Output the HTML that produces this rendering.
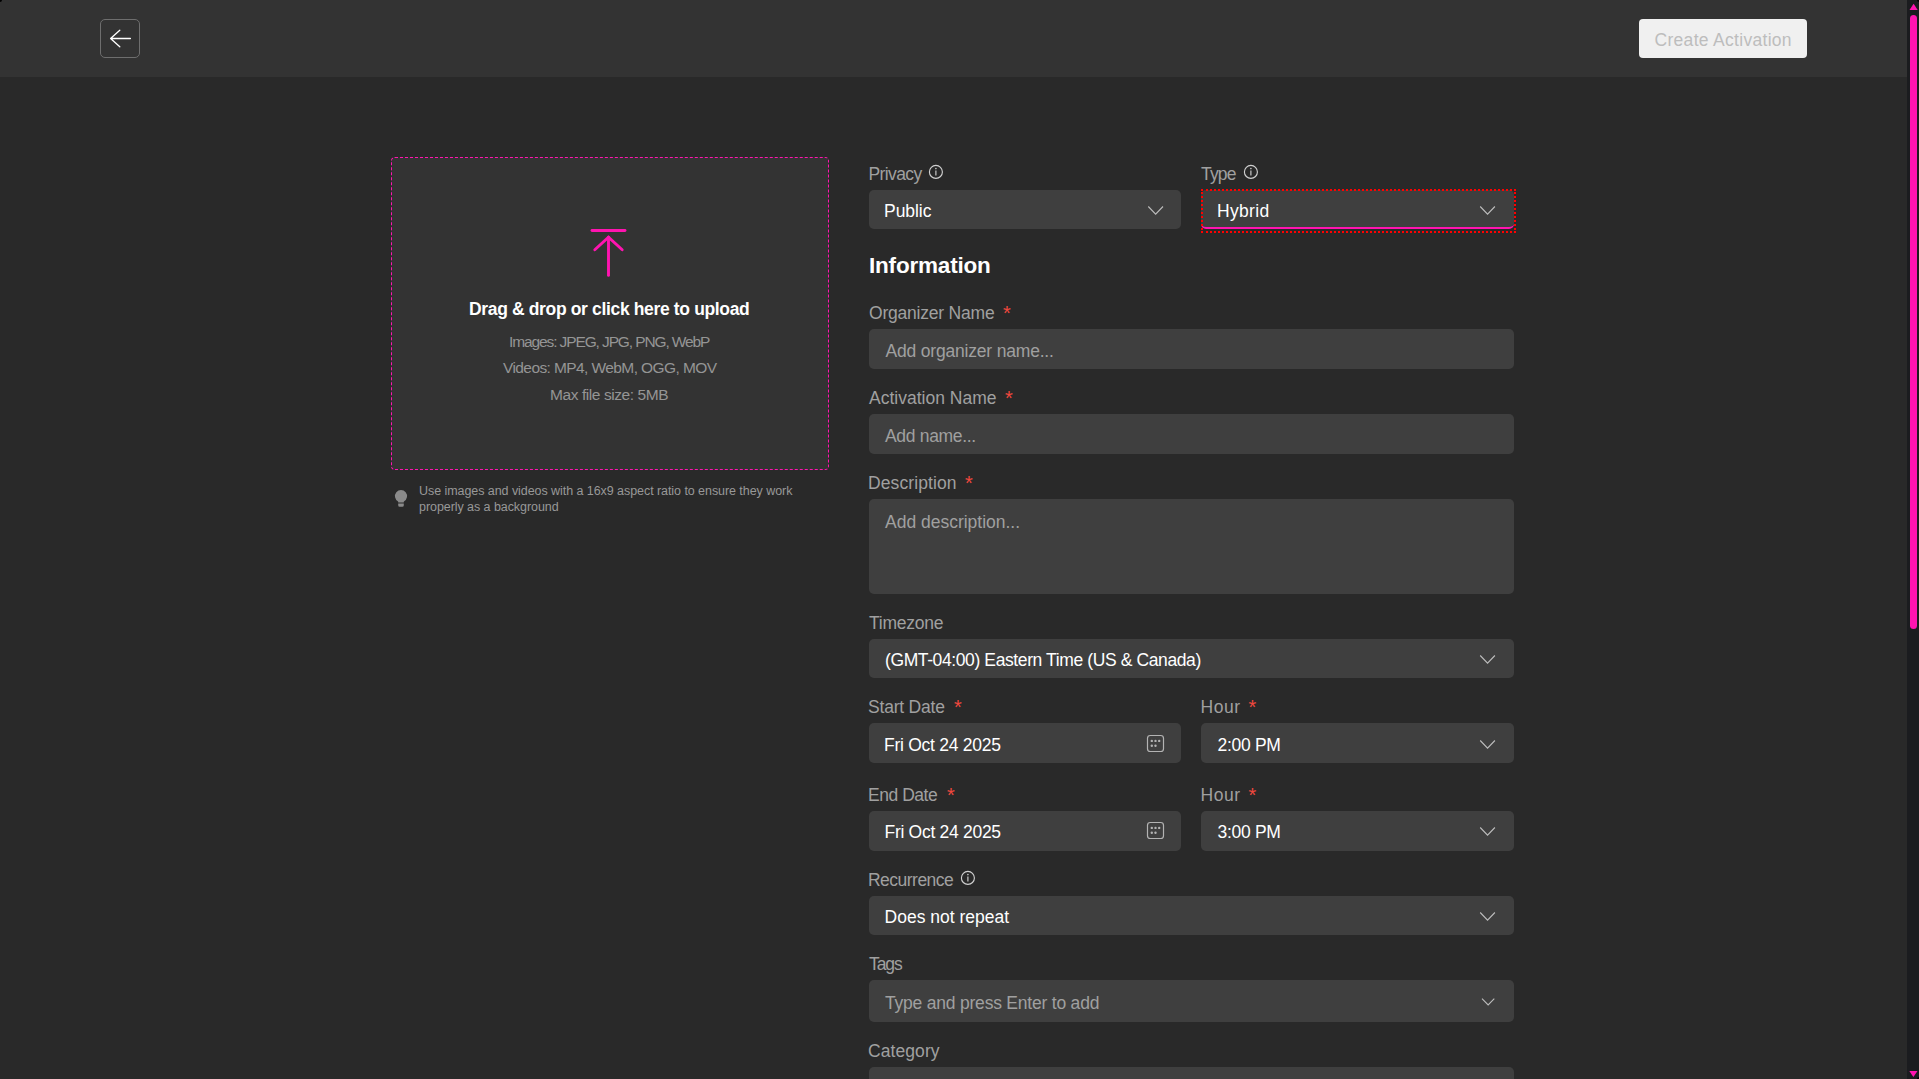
<!DOCTYPE html>
<html><head><meta charset="utf-8">
<style>
*{margin:0;padding:0;box-sizing:border-box}
html,body{width:1919px;height:1079px;overflow:hidden;background:#292929;font-family:"Liberation Sans",sans-serif}
.a{position:absolute}
.t{position:absolute;white-space:nowrap;line-height:20px}
.hdr{left:0;top:0;width:1907px;height:77px;background:#333333}
.back{left:100px;top:19px;width:40px;height:39px;border:1px solid #6e6e6e;border-radius:5px}
.create{left:1639px;top:19px;width:168px;height:39px;background:#f0f0f0;border-radius:4px}
.sb{left:1907px;top:0;width:12px;height:1079px;background:#1b1c1f}
.thumb{left:1910px;top:15px;width:7px;height:614px;background:#ff14b0;border-radius:4px}
.upl{left:391px;top:157px;width:438px;height:313px;background:#333333;border:1px dashed #ff14b0;border-radius:4px}
.lbl{font-size:17.5px;color:#a0a0a0}
.val{font-size:17.5px;color:#ffffff}
.ph{font-size:17.5px;color:#a0a0a0}
.fld{position:absolute;background:#3f3f3f;border-radius:5px}
.req{color:#f0483e;font-size:20px}
.info{font-size:15.5px;color:#959595}
</style></head><body>
<div class="a hdr"></div>
<div class="a back"></div>
<svg class="a" style="left:100px;top:19px" width="40" height="40" viewBox="0 0 40 40">
 <path d="M10.6 19.5 H30.4 M10.6 19.5 L19.8 11.2 M10.6 19.5 L19.8 27.8" stroke="#ffffff" stroke-width="1.3" fill="none" stroke-linecap="round"/>
</svg>
<div class="a create"></div>
<div id="t1" class="t" style="left:1654.5px;top:30px;font-size:17.5px;color:#bdbdbd;letter-spacing:0.3px">Create Activation</div>

<div class="a sb"></div>
<svg class="a" style="left:1907px;top:0" width="12" height="1079">
 <path d="M2.5 10.1 L6.6 3.8 L10.7 10.1 Z" fill="#ff14b0"/>
 <path d="M2.3 1070.9 L6.4 1077 L10.5 1070.9 Z" fill="#ff14b0"/>
</svg>
<div class="a thumb"></div>

<div class="a upl"></div>
<svg class="a" style="left:580px;top:220px" width="60" height="70" viewBox="0 0 60 70">
 <g stroke="#ff14b0" stroke-width="2.9" stroke-linecap="round" fill="none">
  <path d="M12 10.5 H45"/>
  <path d="M28.5 17.2 V55.4"/>
  <path d="M14.8 29.8 L28.5 17.2 L42.2 29.8"/>
 </g>
</svg>
<div id="t2" class="t" style="left:469px;top:299px;font-size:17.5px;font-weight:bold;color:#ffffff;letter-spacing:-0.35px">Drag &amp; drop or click here to upload</div>
<div id="t3" class="t info" style="left:509px;top:332px;letter-spacing:-1.11px">Images: JPEG, JPG, PNG, WebP</div>
<div id="t4" class="t info" style="left:503px;top:358px;letter-spacing:-0.59px">Videos: MP4, WebM, OGG, MOV</div>
<div id="t5" class="t info" style="left:550px;top:385px;letter-spacing:-0.42px">Max file size: 5MB</div>

<svg class="a" style="left:390px;top:486px" width="24" height="24" viewBox="0 0 24 24">
 <path d="M8.1 15.4 A6.05 6.05 0 1 1 13.9 15.4 L13.7 16.6 H8.3 Z" fill="#8a8a8a"/>
 <path d="M8.2 17.6 H13.8 V19.3 A1.5 1.5 0 0 1 12.3 20.8 H9.7 A1.5 1.5 0 0 1 8.2 19.3 Z" fill="#8a8a8a"/>
</svg>
<div id="t6" class="t" style="left:419px;top:483px;font-size:12.5px;line-height:16px;color:#989898;letter-spacing:-0.06px">Use images and videos with a 16x9 aspect ratio to ensure they work<br>properly as a background</div>

<!-- Privacy / Type -->
<div id="t7" class="t lbl" style="left:868.5px;top:164px;letter-spacing:-0.6px">Privacy</div>
<div class="fld" style="left:869px;top:190px;width:312px;height:39px"></div>
<div id="t8" class="t val" style="left:884px;top:201px;letter-spacing:-0.04px">Public</div>

<div id="t9" class="t lbl" style="left:1201px;top:164px;letter-spacing:-0.8px">Type</div>
<div class="fld" style="left:1201px;top:190px;width:313px;height:39px;border-bottom:2px solid #ff14b0"></div>
<div class="a" style="left:1201px;top:189px;width:315px;height:44px;border:2px dotted #ff0000"></div>
<div id="t10" class="t val" style="left:1217px;top:201px;letter-spacing:0.32px">Hybrid</div>

<div id="t11" class="t" style="left:869px;top:251px;font-size:22.5px;line-height:30px;font-weight:bold;color:#ffffff;letter-spacing:-0.19px">Information</div>

<div id="t12" class="t lbl" style="left:869px;top:303px;letter-spacing:-0.21px">Organizer Name</div>
<div id="a12" class="t req" style="left:1003px;top:303px">*</div>
<div class="fld" style="left:869px;top:329px;width:645px;height:40px"></div>
<div id="t13" class="t ph" style="left:885.5px;top:341px;letter-spacing:-0.19px">Add organizer name...</div>

<div id="t14" class="t lbl" style="left:869px;top:388px;letter-spacing:0.01px">Activation Name</div>
<div id="a14" class="t req" style="left:1005px;top:388px">*</div>
<div class="fld" style="left:869px;top:414px;width:645px;height:40px"></div>
<div id="t15" class="t ph" style="left:885px;top:426px;letter-spacing:-0.32px">Add name...</div>

<div id="t16" class="t lbl" style="left:868px;top:473px;letter-spacing:0.09px">Description</div>
<div id="a16" class="t req" style="left:965px;top:473px">*</div>
<div class="fld" style="left:869px;top:499px;width:645px;height:95px"></div>
<div id="t17" class="t ph" style="left:885px;top:512px;letter-spacing:-0.01px">Add description...</div>

<div id="t18" class="t lbl" style="left:869px;top:613px;letter-spacing:-0.26px">Timezone</div>
<div class="fld" style="left:869px;top:639px;width:645px;height:39px"></div>
<div id="t19" class="t val" style="left:885px;top:650px;letter-spacing:-0.39px">(GMT-04:00) Eastern Time (US &amp; Canada)</div>

<div id="t20" class="t lbl" style="left:868px;top:697px;letter-spacing:-0.2px">Start Date</div>
<div id="a20" class="t req" style="left:954px;top:697px">*</div>
<div class="fld" style="left:869px;top:723px;width:312px;height:40px"></div>
<div id="t21" class="t val" style="left:884px;top:735px;letter-spacing:-0.26px">Fri Oct 24 2025</div>
<div id="t22" class="t lbl" style="left:1200.5px;top:697px;letter-spacing:0.51px">Hour</div>
<div id="a22" class="t req" style="left:1248.5px;top:697px">*</div>
<div class="fld" style="left:1201px;top:723px;width:313px;height:40px"></div>
<div id="t23" class="t val" style="left:1217.5px;top:735px;letter-spacing:-0.3px">2:00 PM</div>

<div id="t24" class="t lbl" style="left:868px;top:785px;letter-spacing:-0.46px">End Date</div>
<div id="a24" class="t req" style="left:947px;top:785px">*</div>
<div class="fld" style="left:869px;top:811px;width:312px;height:40px"></div>
<div id="t25" class="t val" style="left:884.5px;top:822px;letter-spacing:-0.29px">Fri Oct 24 2025</div>
<div id="t26" class="t lbl" style="left:1200.5px;top:785px;letter-spacing:0.51px">Hour</div>
<div id="a26" class="t req" style="left:1248.5px;top:785px">*</div>
<div class="fld" style="left:1201px;top:811px;width:313px;height:40px"></div>
<div id="t27" class="t val" style="left:1217.5px;top:822px;letter-spacing:-0.3px">3:00 PM</div>

<div id="t28" class="t lbl" style="left:868px;top:870px;letter-spacing:-0.52px">Recurrence</div>
<div class="fld" style="left:869px;top:896px;width:645px;height:39px"></div>
<div id="t29" class="t val" style="left:884.5px;top:907px;letter-spacing:0.01px">Does not repeat</div>

<div id="t30" class="t lbl" style="left:869px;top:954px;letter-spacing:-1.08px">Tags</div>
<div class="fld" style="left:869px;top:980px;width:645px;height:42px"></div>
<div id="t31" class="t ph" style="left:885px;top:993px;letter-spacing:-0.21px">Type and press Enter to add</div>

<div id="t32" class="t lbl" style="left:868px;top:1041px;letter-spacing:0.08px">Category</div>
<div class="fld" style="left:869px;top:1067px;width:645px;height:40px"></div>


<svg class="a" style="left:0;top:0" width="1919" height="1079" viewBox="0 0 1919 1079">
 <g fill="none" stroke="#bdbdbd" stroke-width="1.1">
  <path d="M1148.3 206.5 L1155.65 214.2 L1163.0 206.5" />
  <path d="M1480.2 206.5 L1487.55 214.2 L1494.9 206.5" />
  <path d="M1480.2 655.5 L1487.55 663.2 L1494.9 655.5" />
  <path d="M1480.2 740.5 L1487.55 748.2 L1494.9 740.5" />
  <path d="M1480.2 827.5 L1487.55 835.2 L1494.9 827.5" />
  <path d="M1480.2 912.5 L1487.55 920.2 L1494.9 912.5" />
  <path d="M1482 998.7 L1488.15 1004.9000000000001 L1494.3 998.7" />
 </g>
 <g fill="none" stroke="#d0d0d0" stroke-width="1.15">
  <circle cx="935.9" cy="171.9" r="6.5"/>
  <circle cx="1250.9" cy="171.9" r="6.5"/>
  <circle cx="967.9" cy="877.9" r="6.5"/>
  <path d="M935.9 170.6 V175.4 M1250.9 170.6 V175.4 M967.9 876.6 V881.4"/>
 </g>
 <g fill="#d0d0d0">
  <circle cx="935.9" cy="168.6" r="0.8"/><circle cx="1250.9" cy="168.6" r="0.8"/><circle cx="967.9" cy="874.6" r="0.8"/>
 </g>
 <g fill="none" stroke="#b3b3b3" stroke-width="1.2">
  <rect x="1147.5" y="735.5" width="16" height="16" rx="2.8"/>
  <rect x="1147.5" y="822.5" width="16" height="16" rx="2.8"/>
 </g>
 <g fill="#b3b3b3">
  <circle cx="1151.8" cy="740.9" r="1.2"/><circle cx="1155.5" cy="740.9" r="1.2"/><circle cx="1159.2" cy="740.9" r="1.2"/>
  <circle cx="1151.8" cy="745.8" r="1.2"/><circle cx="1155.5" cy="745.8" r="1.2"/>
  <circle cx="1151.8" cy="827.9" r="1.2"/><circle cx="1155.5" cy="827.9" r="1.2"/><circle cx="1159.2" cy="827.9" r="1.2"/>
  <circle cx="1151.8" cy="832.8" r="1.2"/><circle cx="1155.5" cy="832.8" r="1.2"/>
 </g>
</svg>
<div class="a" style="left:0;top:0;width:2px;height:2px;background:#000;border-bottom-right-radius:2px"></div>
<div class="a" style="left:1917px;top:0;width:2px;height:2px;background:#000;border-bottom-left-radius:2px"></div>
<div class="a" style="left:1917px;top:1077px;width:2px;height:2px;background:#000;border-top-left-radius:2px"></div>
</body></html>
